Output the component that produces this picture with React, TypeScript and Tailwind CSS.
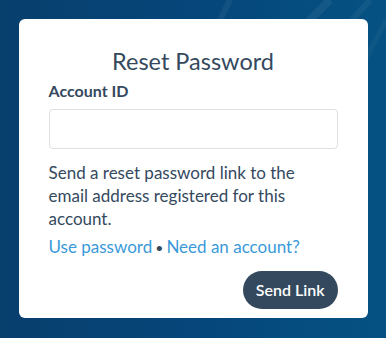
export default function App() {
  return (
    <div
      className="relative flex min-h-[338px] w-full items-start justify-center overflow-hidden bg-gradient-to-r from-[#073f6d] via-[#06467a] to-[#055282] p-[19px] font-['Lato',sans-serif]"
    >
      <svg className="pointer-events-none absolute inset-0 h-full w-full" viewBox="0 0 386 338" preserveAspectRatio="none">
        <path d="M230 0 L200 60" stroke="rgba(255,255,255,0.05)" strokeWidth="6" />
        <path d="M330 0 L290 40" stroke="rgba(255,255,255,0.06)" strokeWidth="8" />
        <path d="M370 0 L330 45" stroke="rgba(255,255,255,0.05)" strokeWidth="6" />
        <path d="M386 20 L360 70" stroke="rgba(255,255,255,0.04)" strokeWidth="5" />
      </svg>
      <div className="relative flex h-[299px] w-[349px] shrink-0 flex-col rounded-[6px] bg-white px-[30px] pt-[27px]">
        <h1 className="text-center text-[23.5px] font-normal leading-[30px] text-[#34495e]">Reset Password</h1>
        <label className="mt-[4px] text-[16px] font-bold leading-[22px] text-[#34495e]">Account ID</label>
        <input
          type="text"
          className="mt-[7px] h-[40px] w-full rounded-[4px] border border-[#dcdfe3] px-3 text-[16px] outline-none"
        />
        <p className="mt-[12px] text-[17px] leading-[23px] text-[#34495e]">
          Send a reset password link to the email address registered for this account.
        </p>
        <div className="mt-[5px] text-[17px] leading-[23px] text-[#34495e]">
          <a href="#" className="text-[#3a9ad9]">Use password</a>
          <span className="mx-[3px] text-[14px]">•</span>
          <a href="#" className="text-[#3a9ad9]">Need an account?</a>
        </div>
        <div className="mt-[12px] flex justify-end">
          <button
            type="button"
            className="h-[38px] rounded-full bg-[#34495e] px-[13px] text-[16px] font-semibold text-white"
          >
            Send Link
          </button>
        </div>
      </div>
    </div>
  );
}
